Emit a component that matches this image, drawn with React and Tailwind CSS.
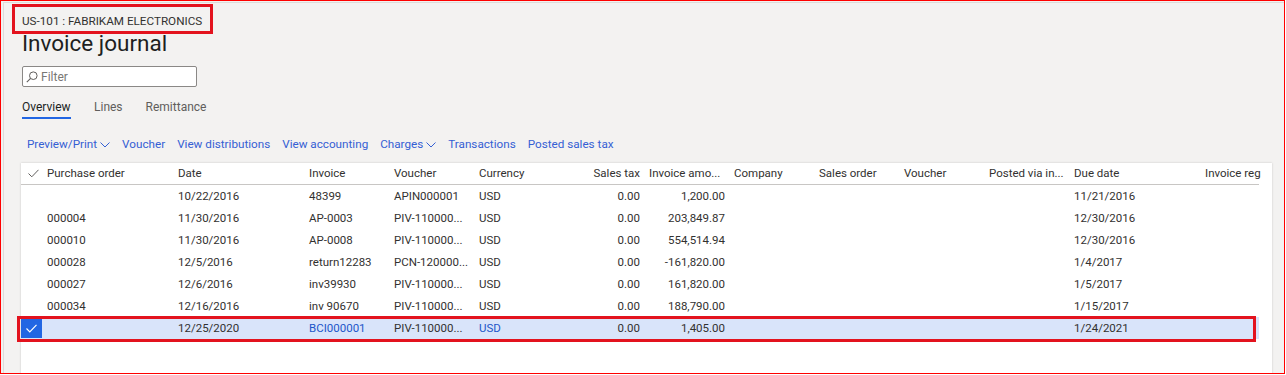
import React from "react";

const cols = [
  { w: "w-[131px]", key: "po" },
  { w: "w-[131px]", key: "date" },
  { w: "w-[85px]", key: "inv" },
  { w: "w-[85px]", key: "vou" },
  { w: "w-[85px]", key: "cur" },
  { w: "w-[85px]", key: "tax", right: true },
  { w: "w-[85px]", key: "amt", right: true },
  { w: "w-[85px]", key: "co" },
  { w: "w-[85px]", key: "so" },
  { w: "w-[85px]", key: "vou2" },
  { w: "w-[85px]", key: "posted" },
  { w: "w-[131px]", key: "due" },
  { w: "w-[62px]", key: "reg" },
];

const headers = [
  "Purchase order",
  "Date",
  "Invoice",
  "Voucher",
  "Currency",
  "Sales tax",
  "Invoice amo...",
  "Company",
  "Sales order",
  "Voucher",
  "Posted via in...",
  "Due date",
  "Invoice reg",
];

const rows = [
  ["", "10/22/2016", "48399", "APIN000001", "USD", "0.00", "1,200.00", "", "", "", "", "11/21/2016", ""],
  ["000004", "11/30/2016", "AP-0003", "PIV-110000...", "USD", "0.00", "203,849.87", "", "", "", "", "12/30/2016", ""],
  ["000010", "11/30/2016", "AP-0008", "PIV-110000...", "USD", "0.00", "554,514.94", "", "", "", "", "12/30/2016", ""],
  ["000028", "12/5/2016", "return12283", "PCN-120000...", "USD", "0.00", "-161,820.00", "", "", "", "", "1/4/2017", ""],
  ["000027", "12/6/2016", "inv39930", "PIV-110000...", "USD", "0.00", "161,820.00", "", "", "", "", "1/5/2017", ""],
  ["000034", "12/16/2016", "inv 90670", "PIV-110000...", "USD", "0.00", "188,790.00", "", "", "", "", "1/15/2017", ""],
];

const selected = ["", "12/25/2020", "BCI000001", "PIV-110000...", "USD", "0.00", "1,405.00", "", "", "", "", "1/24/2021", ""];

function Chevron() {
  return (
    <svg width="10" height="6" viewBox="0 0 10 6" className="ml-[3px] mt-[1px]">
      <path d="M0.5 0.5 L5 5 L9.5 0.5" fill="none" stroke="currentColor" strokeWidth="1" />
    </svg>
  );
}

function Cell({ col, children, header, link }) {
  const right = col.right && !(header && col.key === "amt");
  return (
    <div
      className={`${col.w} shrink-0 overflow-hidden whitespace-nowrap ${
        right ? "pl-[4px] pr-[5px] text-right" : col.key === "reg" ? "pl-[4px]" : "px-[4px]"
      } ${link ? "text-[#1d56c9]" : ""}`}
    >
      {children}
    </div>
  );
}

export default function App() {
  return (
    <div className="relative w-[1285px] h-[374px] overflow-hidden border border-[#ff0000] bg-[#f3f2f1] font-['Roboto',sans-serif] text-[#323130]">
      <div className="ml-[2px] mt-[1px] h-[372px] border-l border-t border-[#dedcda]">
        {/* header */}
        <div className="pl-[18px]">
          <div className="pt-[10px] h-[30px] text-[11.7px] leading-[17px] text-[#323130]">
            US-101 : FABRIKAM ELECTRONICS
          </div>
          <div className="h-[32px] -mt-[4px] text-[22.5px] leading-[28px] text-[#201f1e]">
            Invoice journal
          </div>
          <div className="mt-[5px] flex h-[21px] w-[175px] items-center rounded-[2px] border border-[#8a8886] bg-white">
            <svg width="12" height="12" viewBox="0 0 12 12" className="ml-[3px]">
              <circle cx="7.3" cy="4.7" r="3.8" fill="none" stroke="#605e5c" strokeWidth="1" />
              <path d="M4.6 7.4 L0.8 11.2" stroke="#605e5c" strokeWidth="1.1" />
            </svg>
            <span className="ml-[3px] text-[12px] text-[#797775]">Filter</span>
          </div>
          <div className="mt-[12px] flex h-[22px] text-[12px] leading-[17px]">
            <div className="flex flex-col">
              <span className="text-[#201f1e]">Overview</span>
              <span className="mt-[1px] h-[2px] w-[49px] bg-[#2266e3]" />
            </div>
            <span className="ml-[23px] text-[#605e5c]">Lines</span>
            <span className="ml-[23px] text-[#605e5c]">Remittance</span>
          </div>
          <div className="mt-[15px] flex h-[18px] items-center gap-[12px] pl-[5px] text-[11.7px] text-[#3560d4]">
            <span className="flex items-center">
              Preview/Print
              <Chevron />
            </span>
            <span>Voucher</span>
            <span>View distributions</span>
            <span>View accounting</span>
            <span className="flex items-center">
              Charges
              <Chevron />
            </span>
            <span>Transactions</span>
            <span>Posted sales tax</span>
          </div>
        </div>

        {/* grid */}
        <div className="ml-[17px] mt-[9px] h-[300px] w-[1251px] bg-white shadow-[0_0_2px_rgba(0,0,0,0.18)] text-[11.5px] leading-[22px]">
          <div className="flex h-[22px] w-[1238px] border-b border-[#c8c6c4] leading-[21px] text-[#323130]">
            <div className="flex w-[22px] shrink-0 items-center justify-center">
              <svg width="11" height="9" viewBox="0 0 11 9" className="ml-[2px]">
                <path d="M0.5 4.5 L3.8 7.8 L10.5 0.8" fill="none" stroke="#605e5c" strokeWidth="1" />
              </svg>
            </div>
            {headers.map((h, i) => (
              <Cell key={i} col={cols[i]} header>
                {h}
              </Cell>
            ))}
          </div>
          {rows.map((r, ri) => (
            <div key={ri} className="flex h-[22px] w-[1238px]">
              <div className="w-[22px] shrink-0" />
              {r.map((v, i) => (
                <Cell key={i} col={cols[i]}>
                  {v}
                </Cell>
              ))}
            </div>
          ))}
          <div className="flex h-[22px] w-[1238px] overflow-hidden bg-[#d9e4fa]">
            <div className="flex w-[22px] shrink-0 items-center">
              <div className="flex h-[20px] w-[21px] items-center justify-center bg-[#2266e3]">
                <svg width="11" height="9" viewBox="0 0 11 9">
                  <path d="M0.5 4.5 L3.8 7.8 L10.5 0.8" fill="none" stroke="#ffffff" strokeWidth="1.2" />
                </svg>
              </div>
            </div>
            {selected.map((v, i) => (
              <Cell key={i} col={cols[i]} link={i === 2 || i === 4}>
                {v}
              </Cell>
            ))}
          </div>
        </div>
      </div>

      {/* annotation boxes */}
      <div className="pointer-events-none absolute left-[11px] top-[3px] h-[30px] w-[201px] border-[3px] border-[#e3131e]" />
      <div className="pointer-events-none absolute left-[16px] top-[315px] h-[26px] w-[1239px] border-[3px] border-[#e3131e]" />
    </div>
  );
}
